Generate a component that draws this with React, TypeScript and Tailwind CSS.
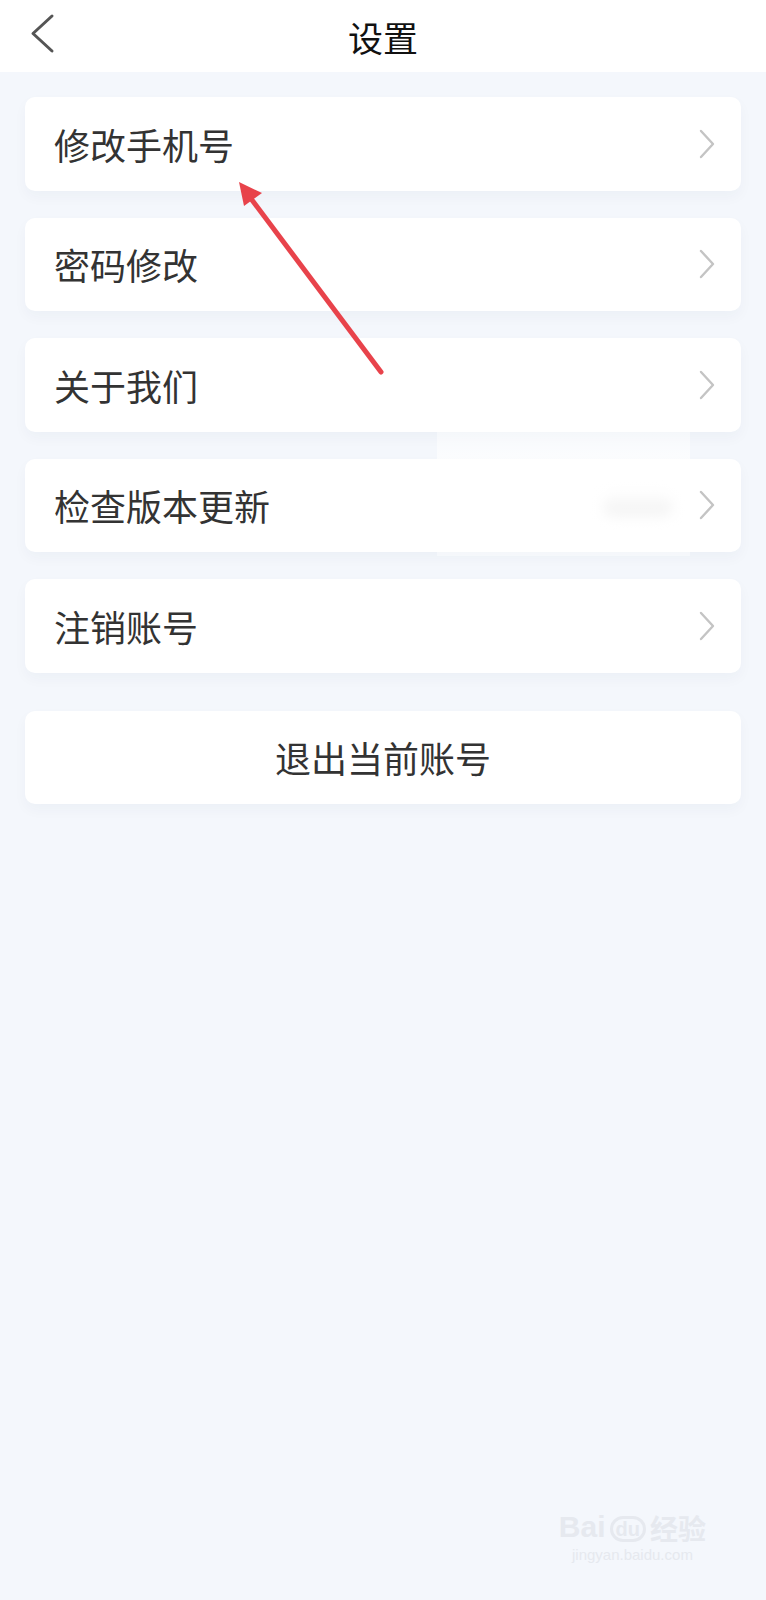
const items = ["修改手机号", "密码修改", "关于我们", "检查版本更新", "注销账号"];

function Chevron() {
  return (
    <svg width="20" height="32" viewBox="0 0 20 32" fill="none">
      <path d="M4 3 L16 16 L4 29" stroke="#c4c4c4" strokeWidth="2.4" strokeLinecap="round" strokeLinejoin="round" />
    </svg>
  );
}

export default function App() {
  return (
    <div
      className="relative w-[766px] min-h-[1600px] bg-[#f4f7fc] overflow-hidden"
      style={{ fontFamily: '"Noto Sans CJK SC", "Noto Sans", sans-serif' }}
    >
      {/* Header */}
      <div className="relative h-[72px] bg-white flex items-center justify-center">
        <svg className="absolute left-[26px] top-[13px]" width="34" height="42" viewBox="0 0 34 42" fill="none">
          <path d="M26 3 L7 20.5 L26 38" stroke="#555" strokeWidth="3" strokeLinecap="round" strokeLinejoin="round" />
        </svg>
        <h1 className="text-[35px] text-[#111] leading-none">设置</h1>
      </div>

      {/* List */}
      <div className="px-[25px] pt-[25px] flex flex-col gap-[27px]">
        {items.map((label, i) => (
          <div
            key={label}
            className="h-[93.5px] bg-white rounded-[10px] shadow-[0_6px_14px_rgba(30,50,90,0.035)] flex items-center justify-between pl-[29px] pr-[24px]"
          >
            <span className="text-[36px] text-[#333] leading-none">{label}</span>
            <div className="flex items-center gap-[24px]">
              {i === 3 && (
                <div className="w-[70px] h-[22px] rounded-full bg-[#d8d8d8] blur-[6px]" />
              )}
              <Chevron />
            </div>
          </div>
        ))}

        <div className="mt-[11px] h-[93.5px] bg-white rounded-[10px] shadow-[0_6px_14px_rgba(30,50,90,0.035)] flex items-center justify-center">
          <span className="text-[36px] text-[#333] leading-none">退出当前账号</span>
        </div>
      </div>

      {/* redaction patch */}
      <div className="absolute left-[437px] top-[428px] w-[253px] h-[128px] bg-gradient-to-b from-white/40 via-white/90 to-white/40 pointer-events-none" />

      {/* annotation arrow */}
      <svg className="absolute left-0 top-0 pointer-events-none" width="766" height="600">
        <line x1="381" y1="372" x2="252" y2="200" stroke="#e8434b" strokeWidth="5" strokeLinecap="round" />
        <polygon points="239,182 262,193 244,206" fill="#e8434b" />
      </svg>

      {/* watermark */}
      <div className="absolute right-[60px] bottom-[34px] flex flex-col items-center text-[#e6e9ef] pointer-events-none">
        <div className="flex items-end gap-[4px] leading-none">
          <span className="text-[30px] font-bold" style={{ fontFamily: '"Liberation Sans", sans-serif' }}>Bai</span>
          <span className="text-[20px] font-bold border-[3px] border-[#e6e9ef] rounded-full px-[3px]" style={{ fontFamily: '"Liberation Sans", sans-serif' }}>du</span>
          <span className="text-[28px] font-bold">经验</span>
        </div>
        <span className="text-[15px] mt-[2px]" style={{ fontFamily: '"Liberation Sans", sans-serif' }}>jingyan.baidu.com</span>
      </div>
    </div>
  );
}
